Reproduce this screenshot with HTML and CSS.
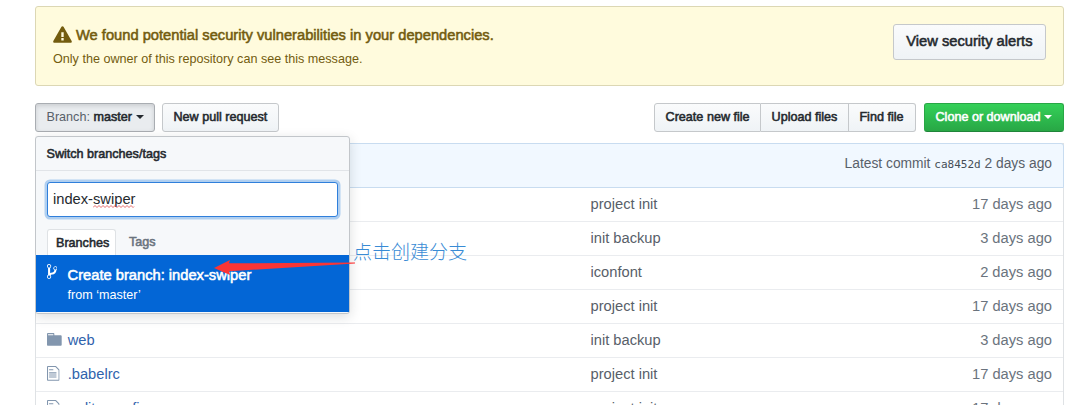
FILE: index.html
```html
<!DOCTYPE html>
<html lang="en">
<head>
<meta charset="utf-8">
<title>Repository</title>
<link rel="stylesheet" href="styles.css">
</head>
<body>
<svg class="defs" width="0" height="0">
  <symbol id="file" viewBox="0 0 12 16"><path d="M6 5H2V4h4v1zM2 8h7V7H2v1zm0 2h7V9H2v1zm0 2h7v-1H2v1zm10-7.500V14c0 .55-.45 1-1 1H1c-.55 0-1-.45-1-1V2c0-.55.45-1 1-1h7.500L12 4.500zM11 5L8 2H1v12h10V5z"/></symbol>
</svg>
<main class="page">
  <section class="flash">
    <div class="flash-text">
      <h4 class="flash-title semi"><svg class="alert" viewBox="0 0 16 16"><path fill-rule="evenodd" d="M8.865 1.520c-.18-.31-.51-.5-.87-.5s-.69.19-.87.5L.275 13.500c-.18.31-.18.69 0 1 .19.31.52.5.87.5h13.700c.36 0 .69-.19.86-.5.17-.31.18-.69.010-1L8.865 1.520zM8.995 13h-2v-2h2v2zm0-3h-2V6h2v4z"/></svg>We found potential security vulnerabilities in your dependencies.</h4>
      <p class="flash-note">Only the owner of this repository can see this message.</p>
    </div>
    <button class="btn btn-large semi">View security alerts</button>
  </section>

  <nav class="toolbar">
    <div class="branch-select">
      <button class="btn selected"><span class="muted">Branch:</span>&nbsp;<span class="semi">master</span><i class="caret"></i></button>
      <div class="menu">
        <div class="menu-title semi">Switch branches/tags</div>
        <div class="menu-filter">
          <div class="input">index-<span class="misspelt">swiper<svg class="squiggle" viewBox="0 0 43 3"><path d="M0 2.500l2-2 2 2 2-2 2 2 2-2 2 2 2-2 2 2 2-2 2 2 2-2 2 2 2-2 2 2 2-2 2 2 2-2 2 2 2-2 2 2 1-1"/></svg></span></div>
          <div class="tabs"><span class="tab active semi">Branches</span><span class="tab semi">Tags</span></div>
        </div>
        <div class="create">
          <svg class="branch-icon" viewBox="0 0 10 16"><path fill-rule="evenodd" d="M10 5c0-1.110-.89-2-2-2a1.993 1.993 0 0 0-1 3.720v.3c-.02.52-.23.98-.63 1.380-.4.4-.86.61-1.380.63-.83.02-1.480.16-2 .45V4.720a1.993 1.993 0 0 0-1-3.720C.88 1 0 1.890 0 3a2 2 0 0 0 1 1.720v6.560c-.59.35-1 .99-1 1.720 0 1.110.89 2 2 2 1.110 0 2-.89 2-2 0-.53-.2-1-.53-1.360.09-.06.48-.41.59-.47.25-.11.56-.17.94-.17 1.050-.05 1.950-.45 2.750-1.250S8.950 7.770 9 6.730h-.02C9.590 6.370 10 5.730 10 5zM2 1.800c.66 0 1.200.55 1.200 1.200 0 .65-.55 1.200-1.200 1.200C1.350 4.200.8 3.650.8 3c0-.65.55-1.200 1.200-1.200zm0 12.410c-.66 0-1.200-.55-1.200-1.200 0-.65.55-1.200 1.200-1.200.65 0 1.200.55 1.200 1.200 0 .65-.55 1.200-1.200 1.200zm6-8c-.66 0-1.200-.55-1.200-1.200 0-.65.55-1.200 1.200-1.200.65 0 1.200.55 1.200 1.200 0 .65-.55 1.200-1.200 1.200z"/></svg>
          <div><div class="create-title semi">Create branch: index-swiper</div><div class="create-from">from ‘master’</div></div>
        </div>
      </div>
      <svg class="arrow" viewBox="0 0 142 17"><path d="M0 9L16 1l-1 3.300L141 3.500v.9L15 12.300l1 3.700z"/></svg>
      <span class="annotation" lang="zh">点击创建分支</span>
    </div>
    <button class="btn semi">New pull request</button>
    <div class="group">
      <button class="btn semi">Create new file</button><button class="btn semi">Upload files</button><button class="btn semi">Find file</button>
    </div>
    <button class="btn primary semi">Clone or download<i class="caret"></i></button>
  </nav>

  <section class="files">
    <div class="commit">Latest commit <code class="sha">ca8452d</code> 2 days ago</div>
    <div class="row"><span class="icon"></span><span class="name"></span><span class="message">project init</span><span class="age">17 days ago</span></div>
    <div class="row"><span class="icon"></span><span class="name"></span><span class="message">init backup</span><span class="age">3 days ago</span></div>
    <div class="row"><span class="icon"></span><span class="name"></span><span class="message">iconfont</span><span class="age">2 days ago</span></div>
    <div class="row"><span class="icon"></span><span class="name"></span><span class="message">project init</span><span class="age">17 days ago</span></div>
    <div class="row"><span class="icon"><svg class="folder" viewBox="0 0 14 16"><path fill-rule="evenodd" d="M13 4H7V3c0-.66-.31-1-1-1H1c-.55 0-1 .45-1 1v10c0 .55.45 1 1 1h12c.55 0 1-.45 1-1V5c0-.55-.45-1-1-1zM6 4H1V3h5v1z"/></svg></span><span class="name">web</span><span class="message">init backup</span><span class="age">3 days ago</span></div>
    <div class="row"><span class="icon"><svg class="file"><use href="#file"/></svg></span><span class="name">.babelrc</span><span class="message">project init</span><span class="age">17 days ago</span></div>
    <div class="row"><span class="icon"><svg class="file"><use href="#file"/></svg></span><span class="name">.editorconfig</span><span class="message">project init</span><span class="age">17 days ago</span></div>
  </section>
</main>
</body>
</html>
```
FILE: styles.css
```css
* { box-sizing: border-box; }
body {
  margin: 0;
  height: 405px;
  overflow: hidden;
  background: #fff;
  color: #24292e;
  font: 14.7px/22px "Liberation Sans", Arial, sans-serif;
}
.defs { position: absolute; }
.page { width: 1029px; height: 405px; overflow: hidden; margin-left: 35px; padding-top: 6px; }
.semi { font-weight: 400; -webkit-text-stroke: 0.55px currentColor; }

.flash {
  display: flex;
  justify-content: space-between;
  align-items: flex-start;
  height: 80px;
  padding: 17px 17px 0;
  border: 1px solid #dcd7b4;
  border-radius: 3px;
  background: #fffbdd;
  color: #735c0f;
}
.flash-title { display: flex; align-items: center; margin: 0; font-size: 14.7px; line-height: 23px; }
.alert { width: 19px; height: 19px; margin: -2px 4px 0 0; fill: #735c0f; stroke: none; }
.flash-note { margin: 1px 0 0; font-size: 12.6px; line-height: 22px; }

.btn {
  display: flex;
  align-items: center;
  height: 29px;
  padding: 0 10.500px 2px;
  border: 1px solid #c5c8cb;
  border-radius: 3px;
  background: linear-gradient(#fafbfc, #eff3f6);
  color: #24292e;
  font-family: inherit;
  font-size: 12.6px;
  line-height: 20px;
  white-space: nowrap;
}
.btn-large { height: 36px; padding: 0 12.500px 2px; font-size: 14.7px; }
.selected { width: 120px; background: #e9ecef; border-color: #a9adb2; box-shadow: inset 0 2px 4px rgba(27, 31, 35, .14); }
.muted { color: #586069; }
.caret { margin-left: 4px; border: 4px solid transparent; border-top-color: currentColor; border-bottom: 0; }
.primary { width: 140px; border-color: #28a745; border-bottom-color: #20853a; background: linear-gradient(#34d058, #28a745); color: #fff; }
.primary .caret { margin-left: 3px; }

.toolbar { display: flex; gap: 7px; margin-top: 17px; height: 29px; }
.group { display: flex; margin-left: auto; margin-right: 1px; }
.group .btn { border-radius: 0; }
.group .btn + .btn { border-left: 0; }
.group .btn:first-child { border-radius: 3px 0 0 3px; }
.group .btn:last-child { border-radius: 0 3px 3px 0; padding-right: 11.5px; }

.branch-select { position: relative; }
.menu {
  position: absolute;
  z-index: 2;
  top: 33px;
  left: 0;
  width: 315px;
  height: 178px;
  border: 1px solid #c2c6ca;
  border-radius: 3px;
  background: #f6f8fa;
  box-shadow: 0 3px 12px rgba(27, 31, 35, .15);
}
.menu-title { height: 34px; padding: 6px 10.500px; border-bottom: 1px solid #e1e4e8; font-size: 12.6px; }
.menu-filter { height: 84px; padding: 11px 11px 0 11px; }
.input {
  height: 35px;
  padding: 5px;
  border: 1px solid #2f7fdb;
  border-radius: 3px;
  background: #fff;
  box-shadow: 0 0 0 2.500px #b0cff0;
}
.misspelt { position: relative; }
.squiggle { position: absolute; left: 0; top: 14px; width: 43px; height: 3px; fill: none; stroke: #e04848; stroke-width: .8; }
.tabs { display: flex; margin-top: 12px; height: 26px; font-size: 12.6px; line-height: 27px; }
.tab { padding: 0 8px 0 13px; color: #6a737d; }
.tab.active { width: 69px; padding: 0 0 0 8px; border: 1px solid #dfe2e5; border-bottom: 0; border-radius: 3px 3px 0 0; background: #fff; color: #24292e; }
.create { display: flex; height: 57px; padding: 8px 10.500px; background: #0366d6; color: #fff; }
.branch-icon { width: 10.500px; height: 16.8px; margin-right: 10.6px; fill: #fff; }
.create-title { line-height: 22px; margin-top: 1px; }
.create-from { font-size: 12.6px; line-height: 18px; }

.arrow { position: absolute; z-index: 3; left: 179px; top: 156px; width: 142px; height: 17px; fill: #fb3535; }
.annotation {
  position: absolute;
  z-index: 3;
  left: 318px;
  top: 135px;
  color: #398bd5;
  font: 300 19px/26px "Noto Sans CJK SC", sans-serif;
  white-space: nowrap;
}

.files { margin-top: 11px; border: 1px solid #dfe2e5; border-bottom: 0; }
.commit {
  height: 45px;
  margin: -1px -1px 0;
  padding: 9px 11px 0 0;
  border: 1px solid #c8dcf0;
  border-radius: 3px 3px 0 0;
  background: #f1f8ff;
  color: #586069;
  font-size: 13.8px;
  text-align: right;
}
.sha { color: #444d56; font: 11px "DejaVu Sans Mono", monospace; }
.row { display: flex; align-items: center; height: 34px; padding-bottom: 2px; border-bottom: 1px solid #eaecef; }
.icon { width: 31.7px; padding-left: 11px; display: flex; fill: #8296ae; }
.folder { width: 14.7px; height: 16.8px; }
.file { width: 12.6px; height: 16.8px; }
.name { width: 522.8px; color: #3063ac; }
.message { flex: 1; color: #586069; }
.age { padding-right: 11px; color: #6a737d; }
```
